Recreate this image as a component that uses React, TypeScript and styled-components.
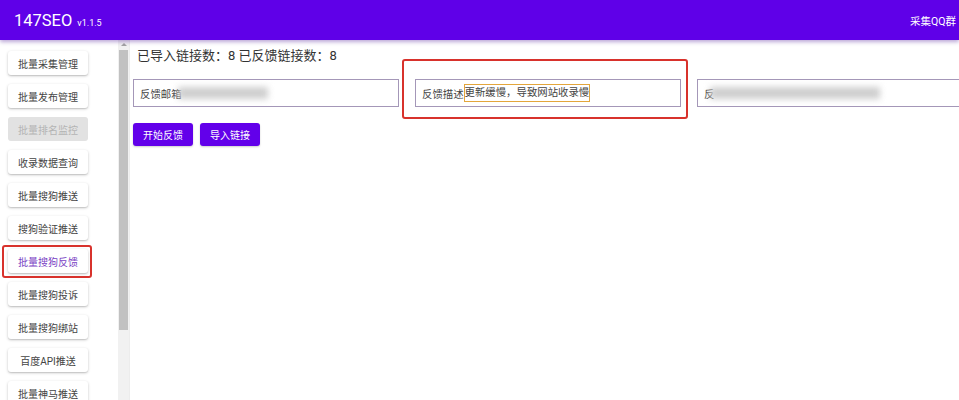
import React from "react";
import styled, { createGlobalStyle } from "styled-components";

const GlobalStyle = createGlobalStyle`
  html, body {
    margin: 0;
    padding: 0;
    background: #ffffff;
    font-family: Roboto, "Noto Sans CJK SC", sans-serif;
    overflow: hidden;
  }
`;

const menu = [
  { label: "批量采集管理" },
  { label: "批量发布管理" },
  { label: "批量排名监控", disabled: true },
  { label: "收录数据查询" },
  { label: "批量搜狗推送" },
  { label: "搜狗验证推送" },
  { label: "批量搜狗反馈", active: true },
  { label: "批量搜狗投诉" },
  { label: "批量搜狗绑站" },
  { label: "百度API推送" },
  { label: "批量神马推送" },
];

const App = () => {
  return (
    <Page>
      <GlobalStyle />
      <Header>
        <Brand>
          147SEO<Version>v1.1.5</Version>
        </Brand>
        <HeaderLink>采集QQ群</HeaderLink>
      </Header>
      <Body>
        <Sidebar>
          {menu.map((m) => (
            <MenuButton key={m.label} $disabled={m.disabled} $active={m.active}>
              {m.label}
            </MenuButton>
          ))}
        </Sidebar>
        <ScrollTrack>
          <ScrollArrow />
          <ScrollThumb />
        </ScrollTrack>
        <Main>
          <Title>已导入链接数：8 已反馈链接数：8</Title>
          <InputRow>
            <Field>
              反馈邮箱
              <Blur $w={90} />
            </Field>
            <Marked>
              <Field>
                反馈描述
                <Selected>更新缓慢，导致网站收录慢</Selected>
              </Field>
            </Marked>
            <Field>
              反
              <Blur $w={170} />
            </Field>
          </InputRow>
          <ButtonRow>
            <Action>开始反馈</Action>
            <Action>导入链接</Action>
          </ButtonRow>
        </Main>
      </Body>
    </Page>
  );
};

export default App;

const Page = styled.div`
  width: 959px;
  height: 400px;
  display: flex;
  flex-direction: column;
`;

const Header = styled.header`
  height: 40px;
  flex-shrink: 0;
  background: #5f00e8;
  display: flex;
  align-items: center;
  justify-content: space-between;
  padding: 0 0 0 14px;
  box-shadow: 0 2px 4px rgba(60, 0, 140, 0.35);
  position: relative;
  z-index: 2;
`;

const Brand = styled.div`
  color: #ffffff;
  font-size: 16.5px;
  display: flex;
  align-items: baseline;
  gap: 5px;
`;

const Version = styled.span`
  font-size: 9px;
`;

const HeaderLink = styled.div`
  color: #ffffff;
  font-size: 10.5px;
  margin-right: 3px;
  white-space: nowrap;
`;

const Body = styled.div`
  flex: 1;
  display: flex;
  overflow: hidden;
`;

const Sidebar = styled.nav`
  width: 118px;
  flex-shrink: 0;
  display: flex;
  flex-direction: column;
  gap: 9px;
  padding: 11px 0 0 8px;
  box-sizing: border-box;
`;

const MenuButton = styled.div<{ $disabled?: boolean; $active?: boolean }>`
  position: relative;
  width: 80px;
  height: 24px;
  flex-shrink: 0;
  border-radius: 3px;
  display: flex;
  align-items: center;
  justify-content: center;
  font-size: 10px;
  background: ${(p) => (p.$disabled ? "#e2e2e2" : "#ffffff")};
  color: ${(p) => (p.$disabled ? "#b4b4b4" : p.$active ? "#7a3fc4" : "#444444")};
  box-shadow: ${(p) =>
    p.$disabled ? "none" : "0 1px 3px rgba(0, 0, 0, 0.22), 0 1px 1px rgba(0, 0, 0, 0.08)"};

  &::after {
    content: "";
    display: ${(p) => (p.$active ? "block" : "none")};
    position: absolute;
    left: -6px;
    right: -4px;
    top: -4px;
    bottom: -5px;
    border: 2px solid #d8322c;
    border-radius: 3px;
    pointer-events: none;
  }
`;

const ScrollTrack = styled.div`
  width: 11px;
  flex-shrink: 0;
  background: #f1f1f1;
  display: flex;
  flex-direction: column;
  align-items: center;
  border-right: 1px solid #ececec;
`;

const ScrollArrow = styled.div`
  margin-top: 3px;
  width: 0;
  height: 0;
  border-left: 3px solid transparent;
  border-right: 3px solid transparent;
  border-bottom: 3px solid #a3a3a3;
`;

const ScrollThumb = styled.div`
  margin-top: 4px;
  width: 9px;
  height: 280px;
  background: #c1c1c1;
`;

const Main = styled.main`
  flex: 1;
  padding: 6px 0 0 3px;
  min-width: 0;
`;

const Title = styled.div`
  font-size: 13px;
  color: #333333;
  padding-left: 4px;
  height: 20px;
  line-height: 20px;
`;

const InputRow = styled.div`
  margin-top: 13px;
  display: flex;
  gap: 16px;
`;

const Field = styled.div`
  width: 266px;
  height: 28px;
  flex-shrink: 0;
  box-sizing: border-box;
  border: 1px solid #a497b8;
  padding: 0 6px;
  display: flex;
  align-items: center;
  font-size: 10.4px;
  color: #444444;
  white-space: nowrap;
  overflow: hidden;
`;

const Marked = styled.div`
  position: relative;
  &::after {
    content: "";
    position: absolute;
    left: -13px;
    right: -7px;
    top: -20px;
    bottom: -12px;
    border: 2px solid #d8322c;
    border-radius: 3px;
    pointer-events: none;
  }
`;

const Selected = styled.span`
  border: 1px solid #e3a63b;
  padding: 1px 0;
  line-height: 14px;
`;

const Blur = styled.span<{ $w: number }>`
  display: inline-block;
  width: ${(p) => p.$w}px;
  height: 12px;
  margin-left: -4px;
  background: #cfcfcf;
  filter: blur(3px);
`;

const ButtonRow = styled.div`
  margin-top: 16px;
  display: flex;
  gap: 7px;
`;

const Action = styled.button`
  width: 60px;
  height: 23px;
  border: none;
  border-radius: 3px;
  background: #6200ea;
  color: #ffffff;
  font-size: 10px;
  font-family: inherit;
  padding: 0;
  box-shadow: 0 1px 2px rgba(0, 0, 0, 0.2);
`;
